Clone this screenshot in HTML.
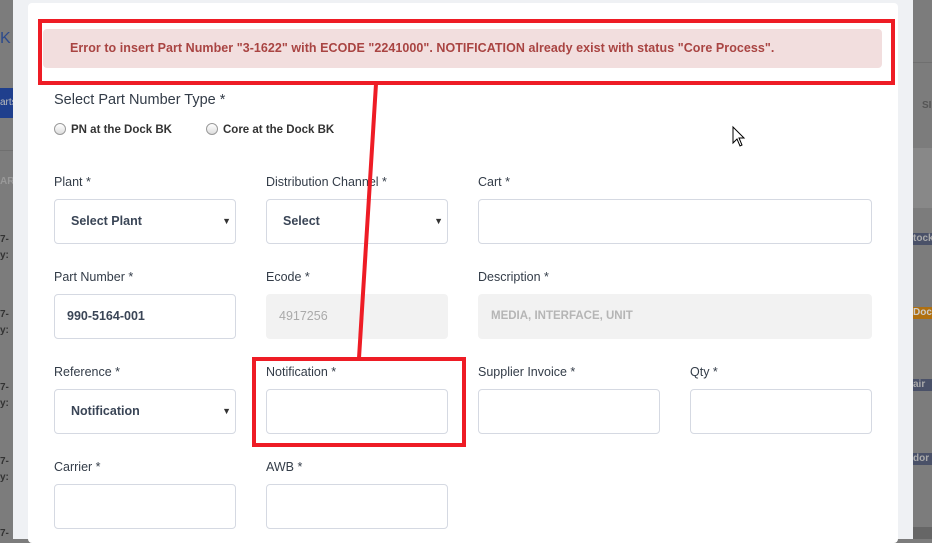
<!DOCTYPE html>
<html><head><meta charset="utf-8"><style>
*{box-sizing:border-box;margin:0;padding:0}
body{width:932px;height:539px;overflow:hidden;position:relative;background:#7c7c7c;font-family:"Liberation Sans",sans-serif}
.abs{position:absolute}
.light{left:13px;top:0;width:900px;height:539px;background:#eff1f4}
.modal{left:28px;top:3px;width:870px;height:540px;background:#fff;border-radius:4px}
.alert{left:43px;top:29px;width:839px;height:39px;background:#f2dede;border-radius:4px;color:#a94442;font-size:12.5px;font-weight:bold;line-height:39px;padding-left:27px;letter-spacing:0.05px}
.red{border:4px solid #ee1c25}
.lbl{font-size:12.5px;color:#333c48}
.in{border:1px solid #d5d9e2;border-radius:4px;height:45px;background:#fff;font-size:12.5px;color:#3a4556;line-height:43px;padding-left:16px;font-weight:bold}
.dis{background:#f2f2f2;border-color:#f2f2f2;color:#aaa;font-weight:normal}
.arr{position:absolute;right:4px;top:0;font-size:9px;color:#333}
.radio{display:inline-block;width:12px;height:12px;border-radius:50%;border:1px solid #999;background:linear-gradient(#fff,#ddd);vertical-align:-2px;margin-right:5px}
.badge{left:913px;width:19px;height:12px;font-size:10px;color:#aaa;overflow:hidden;font-weight:bold;line-height:12px;white-space:nowrap}
</style></head><body>
<div class="abs" style="left:0;top:30px;color:#2c4a8c;font-size:16px">K</div>
<div class="abs" style="left:0;top:88px;width:13px;height:30px;background:#1f3f8d;color:#bbb;font-size:10px;line-height:30px;overflow:hidden">arts</div>
<div class="abs" style="left:0;top:150px;width:13px;height:1px;background:#6f6f6f"></div>
<div class="abs" style="left:0;top:176px;color:#999;font-size:10px;font-weight:bold">AR</div>
<div class="abs" style="left:0;top:232px;color:#333;font-size:10px;font-weight:bold;line-height:16px">7-<br>y:</div>
<div class="abs" style="left:0;top:307px;color:#333;font-size:10px;font-weight:bold;line-height:16px">7-<br>y:</div>
<div class="abs" style="left:0;top:380px;color:#333;font-size:10px;font-weight:bold;line-height:16px">7-<br>y:</div>
<div class="abs" style="left:0;top:454px;color:#333;font-size:10px;font-weight:bold;line-height:16px">7-<br>y:</div>
<div class="abs" style="left:0;top:528px;color:#333;font-size:10px;font-weight:bold">7-</div>
<div class="abs" style="left:913px;top:62px;width:19px;height:1px;background:#6f6f6f"></div>
<div class="abs" style="left:922px;top:100px;color:#555;font-size:10px;font-weight:bold">SI</div>
<div class="abs" style="left:913px;top:148px;width:19px;height:60px;background:#888"></div>
<div class="abs badge" style="top:233px;background:#4a5168">tock</div>
<div class="abs badge" style="top:307px;background:#b07010;color:#ccc">Dock</div>
<div class="abs badge" style="top:379px;background:#4a5168">air</div>
<div class="abs badge" style="top:453px;background:#4a5168">dor</div>
<div class="abs" style="left:913px;top:527px;width:19px;height:12px;background:#666"></div>
<div class="abs light"></div>
<div class="abs modal"></div>
<div class="abs alert">Error to insert Part Number "3-1622" with ECODE "2241000". NOTIFICATION already exist with status "Core Process".</div>
<div class="abs" style="left:54px;top:92px;font-size:14.5px;color:#333c48">Select Part Number Type *</div>
<div class="abs" style="left:54px;top:123px;font-size:11.5px;font-weight:bold;color:#333"><span class="radio"></span>PN at the Dock BK</div>
<div class="abs" style="left:206px;top:123px;font-size:11.5px;font-weight:bold;color:#333"><span class="radio"></span>Core at the Dock BK</div>

<div class="abs lbl" style="left:54px;top:175px">Plant *</div>
<div class="abs lbl" style="left:266px;top:175px">Distribution Channel *</div>
<div class="abs lbl" style="left:478px;top:175px">Cart *</div>
<div class="abs in" style="left:54px;top:199px;width:182px">Select Plant<span class="arr">▼</span></div>
<div class="abs in" style="left:266px;top:199px;width:182px">Select<span class="arr">▼</span></div>
<div class="abs in" style="left:478px;top:199px;width:394px"></div>

<div class="abs lbl" style="left:54px;top:270px">Part Number *</div>
<div class="abs lbl" style="left:266px;top:270px">Ecode *</div>
<div class="abs lbl" style="left:478px;top:270px">Description *</div>
<div class="abs in" style="left:54px;top:294px;width:182px;padding-left:12px">990-5164-001</div>
<div class="abs in dis" style="left:266px;top:294px;width:182px;padding-left:12px">4917256</div>
<div class="abs in dis" style="left:478px;top:294px;width:394px;padding-left:12px;font-size:11.5px;font-weight:bold;color:#b5b5b5">MEDIA, INTERFACE, UNIT</div>

<div class="abs lbl" style="left:54px;top:365px">Reference *</div>
<div class="abs lbl" style="left:266px;top:365px">Notification *</div>
<div class="abs lbl" style="left:478px;top:365px">Supplier Invoice *</div>
<div class="abs lbl" style="left:690px;top:365px">Qty *</div>
<div class="abs in" style="left:54px;top:389px;width:182px">Notification<span class="arr">▼</span></div>
<div class="abs in" style="left:266px;top:389px;width:182px"></div>
<div class="abs in" style="left:478px;top:389px;width:182px"></div>
<div class="abs in" style="left:690px;top:389px;width:182px"></div>

<div class="abs lbl" style="left:54px;top:460px">Carrier *</div>
<div class="abs lbl" style="left:266px;top:460px">AWB *</div>
<div class="abs in" style="left:54px;top:484px;width:182px"></div>
<div class="abs in" style="left:266px;top:484px;width:182px"></div>

<div class="abs red" style="left:38px;top:19px;width:857px;height:66px"></div>
<div class="abs red" style="left:252px;top:357px;width:214px;height:90px"></div>
<svg class="abs" style="left:0;top:0" width="932" height="539"><line x1="376" y1="84" x2="359" y2="358" stroke="#ee1c25" stroke-width="4"/>
<path d="M733 127 L733 143 L737 139 L740 146 L742 145 L739 138 L744 138 Z" fill="#fff" stroke="#000" stroke-width="1"/></svg>
</body></html>
